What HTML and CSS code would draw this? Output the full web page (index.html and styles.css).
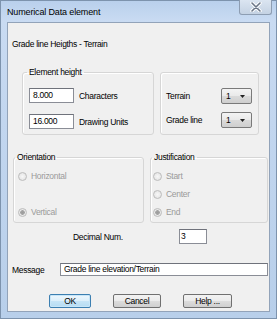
FILE: index.html
```html
<!DOCTYPE html>
<html lang="en">
<head>
    <meta charset="UTF-8">
    <title>Numerical Data element</title>
    <link rel="stylesheet" href="styles.css">
</head>
<body>

<div class="window">
    <div class="titlebar">
        <span class="title">Numerical Data element</span>
        <span class="close">
            <svg width="12" height="10" viewBox="0 0 12 10">
                <path d="M2 1 L10 9 M10 1 L2 9" stroke="#fff" stroke-width="3.4" stroke-linecap="round"/>
                <path d="M2 1 L10 9 M10 1 L2 9" stroke="#6b7788" stroke-width="1.6" stroke-linecap="round"/>
            </svg>
        </span>
    </div>

    <div class="client">
        <p class="heading">Grade line Heigths - Terrain</p>

        <div class="row top-row">
            <fieldset class="group height-group">
                <legend>Element height</legend>
                <div class="fields">
                    <span class="textbox">8.000</span><span class="lbl">Characters</span>
                    <span class="textbox">16.000</span><span class="lbl">Drawing Units</span>
                </div>
            </fieldset>
            <fieldset class="group select-group">
                <div class="fields">
                    <span class="lbl">Terrain</span>
                    <span class="combo">1 <svg width="5" height="3" viewBox="0 0 5 3"><path d="M0 0 H5 L2.5 3 Z" fill="#222"/></svg></span>
                    <span class="lbl">Grade line</span>
                    <span class="combo">1 <svg width="5" height="3" viewBox="0 0 5 3"><path d="M0 0 H5 L2.5 3 Z" fill="#222"/></svg></span>
                </div>
            </fieldset>
        </div>

        <div class="row mid-row">
            <fieldset class="group orient-group">
                <legend>Orientation</legend>
                <div class="radios">
                    <span class="option"><span class="radio"></span>Horizontal</span>
                    <span class="option last"><span class="radio checked"></span>Vertical</span>
                </div>
            </fieldset>
            <fieldset class="group just-group">
                <legend>Justification</legend>
                <div class="radios">
                    <span class="option"><span class="radio"></span>Start</span>
                    <span class="option"><span class="radio"></span>Center</span>
                    <span class="option"><span class="radio checked"></span>End</span>
                </div>
            </fieldset>
        </div>

        <div class="decimal-row">
            <span class="lbl decimal-lbl">Decimal Num.</span>
            <span class="textbox decimal-box">3</span>
        </div>

        <div class="message-row">
            <span class="lbl message-lbl">Message</span>
            <span class="textbox message-box">Grade line elevation/Terrain</span>
        </div>

        <div class="buttons">
            <span class="btn default ok">OK</span>
            <span class="btn cancel">Cancel</span>
            <span class="btn help">Help ...</span>
        </div>
    </div>
</div>

</body>
</html>
```

FILE: styles.css
```css
* { margin: 0; padding: 0; box-sizing: border-box; }
body { background: #fff; font-family: "Liberation Sans", Arial, sans-serif; font-size: 8.5px; letter-spacing: -0.3px; line-height: 10px; color: #000; }

.window {
    width: 277px;
    height: 319px;
    display: flex;
    flex-direction: column;
    border: 1px solid #7d93ad;
    background: linear-gradient(to bottom, #b9d0ec 0, #c9dbf2 20px, #c2d6ef 120px, #b8cfea 100%);
}

.titlebar {
    height: 21px;
    display: flex;
    justify-content: space-between;
    align-items: center;
}
.title { padding-left: 6px; font-size: 9px; letter-spacing: -0.15px; }
.close {
    align-self: flex-start;
    width: 33px;
    height: 15px;
    margin-right: 4px;
    margin-top: -1px;
    display: flex;
    align-items: center;
    justify-content: center;
    border: 1px solid #8d9db2;
    border-top: none;
    border-radius: 0 0 3px 3px;
    background: linear-gradient(to bottom, #dbe5f1, #c4d2e3);
}

.client {
    flex: 1;
    margin: 0 6px 6px 6px;
    border: 1px solid #92a3b9;
    background: #f0f0f0;
}

.heading { margin: 16px 0 0 4px; }

.row { display: flex; align-items: flex-start; }
.top-row { margin-top: 18px; padding-left: 14px; }
.mid-row { margin-top: 17px; padding-left: 5px; }

.group {
    border: 1px solid #d6d6d6;
    border-radius: 3px;
    box-shadow: inset 1px 1px 0 #fff;
    min-width: 0;
}
.group legend { margin-left: 4px; padding: 0 2px; line-height: 10px; }

.height-group { width: 132px; height: 68px; }
.select-group { width: 99px; height: 63px; margin: 5px 0 0 6px; }
.orient-group { width: 131px; height: 71px; }
.just-group { width: 118px; height: 71px; margin-left: 6px; }
.orient-group legend, .just-group legend { margin-left: 1px; }

.fields { display: grid; align-items: center; }
.height-group .fields { grid-template-columns: 45px auto; column-gap: 5px; row-gap: 11px; padding: 11px 0 0 6px; }
.select-group .fields { grid-template-columns: 55px 31px; row-gap: 8px; padding: 15px 0 0 5px; }

.textbox {
    display: block;
    height: 15px;
    padding: 0 3px;
    line-height: 13px;
    background: #fff;
    border: 1px solid #8a8d96;
    border-top-color: #6f727b;
}

.combo {
    height: 16px;
    display: flex;
    align-items: center;
    justify-content: space-between;
    padding: 0 6px 0 4px;
    border: 1px solid #7a7a7a;
    border-radius: 2px;
    background: linear-gradient(to bottom, #f4f4f4 0, #e9e9e9 50%, #dadada 51%, #cfcfcf 100%);
}

.radios {
    display: grid;
    grid-template-rows: repeat(3, 12px);
    row-gap: 6px;
    padding-top: 8px;
}
.orient-group .radios { padding-left: 4px; }
.just-group .radios { padding-left: 2px; }
.option { display: flex; align-items: center; color: #9a9a9a; }
.option.last { grid-row: 3; }
.radio {
    width: 9px;
    height: 9px;
    margin-right: 4px;
    border-radius: 50%;
    border: 1px solid #bcbcbc;
    background: radial-gradient(circle, #f7f7f7 0, #e0e0e0 100%);
}
.radio.checked { background: radial-gradient(circle, #9c9c9c 0, #a4a4a4 2px, #ececec 2.6px, #e0e0e0 100%); }

.decimal-row { display: flex; align-items: center; margin-top: 6px; padding-left: 65px; }
.decimal-lbl { width: 106px; }
.decimal-box { width: 28px; padding: 0 1px; }

.message-row { display: flex; align-items: center; margin-top: 19px; padding-left: 4px; }
.message-lbl { width: 48px; }
.message-box { width: 208px; height: 13px; line-height: 11px; }

.buttons { display: flex; margin-top: 18px; padding-left: 41px; }
.btn {
    height: 14px;
    display: flex;
    align-items: center;
    justify-content: center;
    border: 1px solid #707070;
    border-radius: 2px;
    background: linear-gradient(to bottom, #f2f2f2 0, #ebebeb 50%, #dddddd 51%, #cfcfcf 100%);
}
.btn.default {
    border-color: #3c7fb1;
    box-shadow: inset 0 0 0 1px #c8e6f8;
    background: linear-gradient(to bottom, #eef7fd 0, #dceffa 50%, #c6e5f7 51%, #b6dcf3 100%);
}
.ok { width: 42px; }
.cancel { width: 48px; margin-left: 22px; }
.help { width: 49px; margin-left: 22px; }
```
